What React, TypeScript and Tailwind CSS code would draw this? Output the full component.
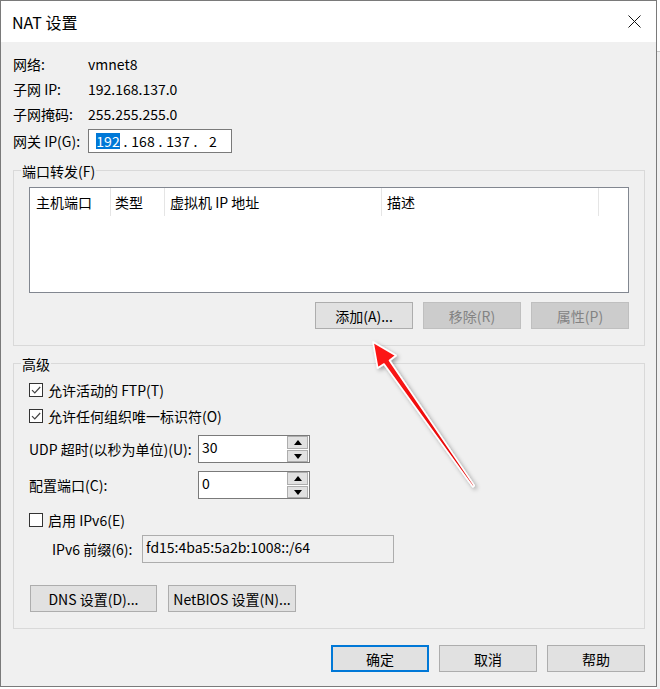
import React from "react";

const font = "font-['Noto_Sans_CJK_SC','Noto_Sans',sans-serif]";

function Check({ checked }: { checked: boolean }) {
  return (
    <div className="w-[14px] h-[14px] border border-[#333333] bg-white flex items-center justify-center shrink-0">
      {checked && (
        <svg width="12" height="12" viewBox="0 0 12 12">
          <path d="M2 6.2 L4.8 9 L10.2 3" fill="none" stroke="#444444" strokeWidth="1.2" />
        </svg>
      )}
    </div>
  );
}

function Tri({ up }: { up: boolean }) {
  return (
    <svg width="8" height="5" viewBox="0 0 8 5">
      {up ? <path d="M0 5 L4 0 L8 5 Z" fill="#000" /> : <path d="M0 0 L4 5 L8 0 Z" fill="#000" />}
    </svg>
  );
}

function Spin({ value }: { value: string }) {
  return (
    <div className="w-[112px] h-[28px] border border-[#7a7a7a] bg-white flex">
      <div className="flex-1 pl-[3px] leading-[22px]">{value}</div>
      <div className="flex flex-col gap-[1px] pr-[1px]">
        <div className="w-[21px] h-[13px] border border-[#adadad] bg-[#e1e1e1] flex items-center justify-center">
          <Tri up />
        </div>
        <div className="w-[21px] h-[12px] border border-[#adadad] bg-[#e1e1e1] flex items-center justify-center">
          <Tri up={false} />
        </div>
      </div>
    </div>
  );
}

function Btn({
  children,
  w,
  disabled,
  primary,
}: {
  children: React.ReactNode;
  w: string;
  disabled?: boolean;
  primary?: boolean;
}) {
  const base = "h-[27px] flex items-center justify-center leading-none shrink-0 whitespace-nowrap";
  if (disabled)
    return <div className={`${base} ${w} bg-[#cccccc] border border-[#bfbfbf] text-[#838383]`}>{children}</div>;
  if (primary)
    return <div className={`${base} ${w} bg-[#e1e1e1] border-2 border-[#0078d7] text-black`}>{children}</div>;
  return <div className={`${base} ${w} bg-[#e1e1e1] border border-[#adadad] text-black`}>{children}</div>;
}

export default function App() {
  return (
    <div className={`relative w-[660px] h-[689px] bg-white flex ${font} text-[14px] leading-[20px] text-black whitespace-nowrap overflow-hidden`}>
      <div className="w-[657px] h-[687px] border border-[#7a7a7a] flex flex-col">
        {/* title bar */}
        <div className="h-[41px] bg-white flex items-center justify-between pl-[11px] pr-[15px] shrink-0">
          <div className="text-[16px] leading-none">NAT 设置</div>
          <svg width="13" height="13" viewBox="0 0 13 13">
            <path d="M0.5 0.5 L12.5 12.5 M12.5 0.5 L0.5 12.5" stroke="#111" strokeWidth="1" />
          </svg>
        </div>
        {/* body */}
        <div className="flex-1 bg-[#f0f0f0] pl-[12px] pr-[11px] pt-[9px] flex flex-col">
          <div className="flex h-[25px] items-center">
            <div className="w-[75px]">网络:</div>
            <div>vmnet8</div>
          </div>
          <div className="flex h-[25px] items-center">
            <div className="w-[75px]">子网 IP:</div>
            <div>192.168.137.0</div>
          </div>
          <div className="flex h-[25px] items-center">
            <div className="w-[75px]">子网掩码:</div>
            <div>255.255.255.0</div>
          </div>
          <div className="flex items-center mt-[3px] h-[24px]">
            <div className="w-[75px]">网关 IP(G):</div>
            <div className="w-[144px] h-[24px] border border-[#7a7a7a] bg-white flex items-center pl-[4px]">
              <div className="w-[30px] text-center">
                <span className="bg-[#0078d7] text-white inline-block leading-[16px]">192</span>
              </div>
              <div className="w-[5px] text-center">.</div>
              <div className="w-[30px] text-center">168</div>
              <div className="w-[5px] text-center">.</div>
              <div className="w-[30px] text-center">137</div>
              <div className="w-[5px] text-center">.</div>
              <div className="w-[30px] text-center">2</div>
            </div>
          </div>

          {/* port forwarding group */}
          <div className="relative mt-[17px] border border-[#d9d9d9] pl-[15px] pr-[15px] pt-[16px] pb-[16px]">
            <div className="absolute left-[7px] top-[-10px] px-[1px] bg-[#f0f0f0] leading-[20px]">端口转发(F)</div>
            <div className="h-[106px] border border-[#828790] bg-white">
              <div className="flex h-[28px] items-center">
                <div className="w-[81px] h-full border-r border-[#e5e5e5] pl-[6px] flex items-center">主机端口</div>
                <div className="w-[54px] h-full border-r border-[#e5e5e5] pl-[4px] flex items-center">类型</div>
                <div className="w-[217px] h-full border-r border-[#e5e5e5] pl-[5px] flex items-center">虚拟机 IP 地址</div>
                <div className="w-[217px] h-full border-r border-[#e5e5e5] pl-[5px] flex items-center">描述</div>
              </div>
            </div>
            <div className="mt-[9px] flex justify-end gap-[10px]">
              <Btn w="w-[98px]">添加(A)...</Btn>
              <Btn w="w-[98px]" disabled>
                移除(R)
              </Btn>
              <Btn w="w-[98px]" disabled>
                属性(P)
              </Btn>
            </div>
          </div>

          {/* advanced group */}
          <div className="relative mt-[17px] border border-[#d9d9d9] pl-[15px] pr-[15px] pt-[13px] pb-[16px]">
            <div className="absolute left-[7px] top-[-10px] px-[1px] bg-[#f0f0f0] leading-[20px]">高级</div>
            <div className="flex items-center h-[26px] gap-[5px]">
              <Check checked />
              <div>允许活动的 FTP(T)</div>
            </div>
            <div className="flex items-center h-[26px] gap-[5px]">
              <Check checked />
              <div>允许任何组织唯一标识符(O)</div>
            </div>
            <div className="flex items-center mt-[6px] h-[28px]">
              <div className="w-[169px]">UDP 超时(以秒为单位)(U):</div>
              <Spin value="30" />
            </div>
            <div className="flex items-center mt-[8px] h-[28px]">
              <div className="w-[169px]">配置端口(C):</div>
              <Spin value="0" />
            </div>
            <div className="flex items-center h-[26px] gap-[5px] mt-[8px]">
              <Check checked={false} />
              <div>启用 IPv6(E)</div>
            </div>
            <div className="flex items-center mt-[2px] h-[28px]">
              <div className="w-[113px] pl-[23px]">IPv6 前缀(6):</div>
              <div className="w-[252px] h-[28px] border border-[#adadad] bg-[#f0f0f0] pl-[3px] leading-[22px]">
                fd15:4ba5:5a2b:1008::/64
              </div>
            </div>
            <div className="flex gap-[11px] mt-[22px] ml-[1px]">
              <Btn w="w-[127px]">DNS 设置(D)...</Btn>
              <Btn w="w-[128px]">NetBIOS 设置(N)...</Btn>
            </div>
          </div>

          {/* bottom buttons */}
          <div className="mt-[16px] flex justify-end gap-[10px]">
            <Btn w="w-[98px]" primary>
              确定
            </Btn>
            <Btn w="w-[98px]">取消</Btn>
            <Btn w="w-[98px]">帮助</Btn>
          </div>
        </div>
      </div>
      {/* background strip to the right */}
      <div className="flex-1 flex flex-col">
        <div className="h-[52px] bg-white border-b border-[#c8c8c8]"></div>
        <div className="flex-1 bg-[#f0f0f0]"></div>
      </div>

      {/* red annotation arrow */}
      <svg className="absolute left-0 top-0 pointer-events-none" width="660" height="689" viewBox="0 0 660 689">
        <defs>
          <filter id="sh" x="-20%" y="-20%" width="140%" height="140%">
            <feDropShadow dx="2" dy="2" stdDeviation="2" floodColor="#000" floodOpacity="0.35" />
          </filter>
          <linearGradient id="rg" x1="0" y1="0" x2="1" y2="1">
            <stop offset="0" stopColor="#ff1a1a" />
            <stop offset="1" stopColor="#e00000" />
          </linearGradient>
        </defs>
        <polygon
          points="373,342 396,355.5 389.5,360.5 474.3,485.6 472.8,486.8 384,364 377.7,368"
          fill="url(#rg)"
          stroke="#ffffff"
          strokeWidth="1.6"
          strokeLinejoin="round"
          filter="url(#sh)"
        />
      </svg>
    </div>
  );
}
